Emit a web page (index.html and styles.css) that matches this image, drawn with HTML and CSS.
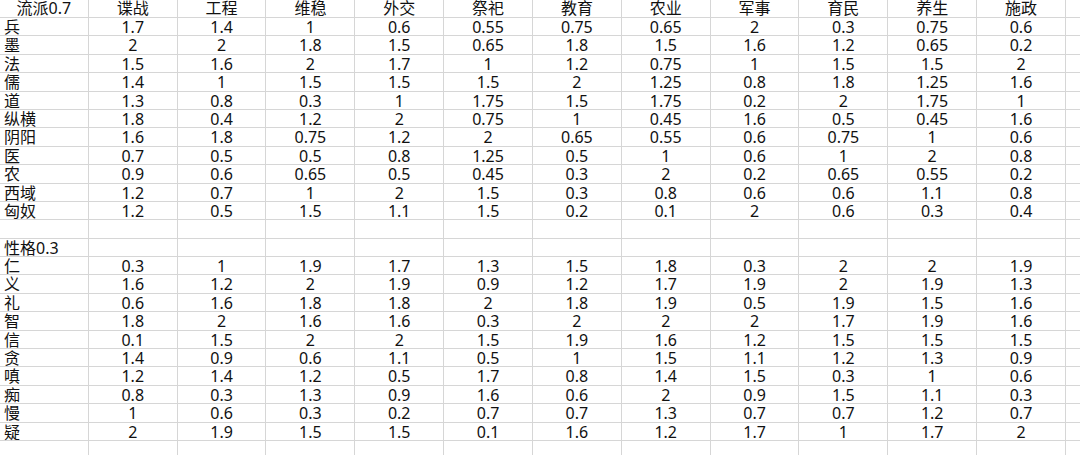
FILE: index.html
```html
<!DOCTYPE html>
<html lang="zh">
<head>
<meta charset="utf-8">
<link rel="stylesheet" href="styles.css">
</head>
<body>
<div class="sheet">
  <div class="row head first"><div class="c hdr">流派0.7</div><div class="c">谍战</div><div class="c">工程</div><div class="c">维稳</div><div class="c">外交</div><div class="c">祭祀</div><div class="c">教育</div><div class="c">农业</div><div class="c">军事</div><div class="c">育民</div><div class="c">养生</div><div class="c">施政</div><div class="f"></div></div>
  <div class="row"><div class="c l">兵</div><div class="c">1.7</div><div class="c">1.4</div><div class="c">1</div><div class="c">0.6</div><div class="c">0.55</div><div class="c">0.75</div><div class="c">0.65</div><div class="c">2</div><div class="c">0.3</div><div class="c">0.75</div><div class="c">0.6</div><div class="f"></div></div>
  <div class="row"><div class="c l">墨</div><div class="c">2</div><div class="c">2</div><div class="c">1.8</div><div class="c">1.5</div><div class="c">0.65</div><div class="c">1.8</div><div class="c">1.5</div><div class="c">1.6</div><div class="c">1.2</div><div class="c">0.65</div><div class="c">0.2</div><div class="f"></div></div>
  <div class="row"><div class="c l">法</div><div class="c">1.5</div><div class="c">1.6</div><div class="c">2</div><div class="c">1.7</div><div class="c">1</div><div class="c">1.2</div><div class="c">0.75</div><div class="c">1</div><div class="c">1.5</div><div class="c">1.5</div><div class="c">2</div><div class="f"></div></div>
  <div class="row"><div class="c l">儒</div><div class="c">1.4</div><div class="c">1</div><div class="c">1.5</div><div class="c">1.5</div><div class="c">1.5</div><div class="c">2</div><div class="c">1.25</div><div class="c">0.8</div><div class="c">1.8</div><div class="c">1.25</div><div class="c">1.6</div><div class="f"></div></div>
  <div class="row"><div class="c l">道</div><div class="c">1.3</div><div class="c">0.8</div><div class="c">0.3</div><div class="c">1</div><div class="c">1.75</div><div class="c">1.5</div><div class="c">1.75</div><div class="c">0.2</div><div class="c">2</div><div class="c">1.75</div><div class="c">1</div><div class="f"></div></div>
  <div class="row"><div class="c l">纵横</div><div class="c">1.8</div><div class="c">0.4</div><div class="c">1.2</div><div class="c">2</div><div class="c">0.75</div><div class="c">1</div><div class="c">0.45</div><div class="c">1.6</div><div class="c">0.5</div><div class="c">0.45</div><div class="c">1.6</div><div class="f"></div></div>
  <div class="row"><div class="c l">阴阳</div><div class="c">1.6</div><div class="c">1.8</div><div class="c">0.75</div><div class="c">1.2</div><div class="c">2</div><div class="c">0.65</div><div class="c">0.55</div><div class="c">0.6</div><div class="c">0.75</div><div class="c">1</div><div class="c">0.6</div><div class="f"></div></div>
  <div class="row"><div class="c l">医</div><div class="c">0.7</div><div class="c">0.5</div><div class="c">0.5</div><div class="c">0.8</div><div class="c">1.25</div><div class="c">0.5</div><div class="c">1</div><div class="c">0.6</div><div class="c">1</div><div class="c">2</div><div class="c">0.8</div><div class="f"></div></div>
  <div class="row"><div class="c l">农</div><div class="c">0.9</div><div class="c">0.6</div><div class="c">0.65</div><div class="c">0.5</div><div class="c">0.45</div><div class="c">0.3</div><div class="c">2</div><div class="c">0.2</div><div class="c">0.65</div><div class="c">0.55</div><div class="c">0.2</div><div class="f"></div></div>
  <div class="row"><div class="c l">西域</div><div class="c">1.2</div><div class="c">0.7</div><div class="c">1</div><div class="c">2</div><div class="c">1.5</div><div class="c">0.3</div><div class="c">0.8</div><div class="c">0.6</div><div class="c">0.6</div><div class="c">1.1</div><div class="c">0.8</div><div class="f"></div></div>
  <div class="row"><div class="c l">匈奴</div><div class="c">1.2</div><div class="c">0.5</div><div class="c">1.5</div><div class="c">1.1</div><div class="c">1.5</div><div class="c">0.2</div><div class="c">0.1</div><div class="c">2</div><div class="c">0.6</div><div class="c">0.3</div><div class="c">0.4</div><div class="f"></div></div>
  <div class="row"><div class="c"></div><div class="c"></div><div class="c"></div><div class="c"></div><div class="c"></div><div class="c"></div><div class="c"></div><div class="c"></div><div class="c"></div><div class="c"></div><div class="c"></div><div class="c"></div><div class="f"></div></div>
  <div class="row"><div class="c l">性格0.3</div><div class="c"></div><div class="c"></div><div class="c"></div><div class="c"></div><div class="c"></div><div class="c"></div><div class="c"></div><div class="c"></div><div class="c"></div><div class="c"></div><div class="c"></div><div class="f"></div></div>
  <div class="row"><div class="c l">仁</div><div class="c">0.3</div><div class="c">1</div><div class="c">1.9</div><div class="c">1.7</div><div class="c">1.3</div><div class="c">1.5</div><div class="c">1.8</div><div class="c">0.3</div><div class="c">2</div><div class="c">2</div><div class="c">1.9</div><div class="f"></div></div>
  <div class="row"><div class="c l">义</div><div class="c">1.6</div><div class="c">1.2</div><div class="c">2</div><div class="c">1.9</div><div class="c">0.9</div><div class="c">1.2</div><div class="c">1.7</div><div class="c">1.9</div><div class="c">2</div><div class="c">1.9</div><div class="c">1.3</div><div class="f"></div></div>
  <div class="row"><div class="c l">礼</div><div class="c">0.6</div><div class="c">1.6</div><div class="c">1.8</div><div class="c">1.8</div><div class="c">2</div><div class="c">1.8</div><div class="c">1.9</div><div class="c">0.5</div><div class="c">1.9</div><div class="c">1.5</div><div class="c">1.6</div><div class="f"></div></div>
  <div class="row"><div class="c l">智</div><div class="c">1.8</div><div class="c">2</div><div class="c">1.6</div><div class="c">1.6</div><div class="c">0.3</div><div class="c">2</div><div class="c">2</div><div class="c">2</div><div class="c">1.7</div><div class="c">1.9</div><div class="c">1.6</div><div class="f"></div></div>
  <div class="row"><div class="c l">信</div><div class="c">0.1</div><div class="c">1.5</div><div class="c">2</div><div class="c">2</div><div class="c">1.5</div><div class="c">1.9</div><div class="c">1.6</div><div class="c">1.2</div><div class="c">1.5</div><div class="c">1.5</div><div class="c">1.5</div><div class="f"></div></div>
  <div class="row"><div class="c l">贪</div><div class="c">1.4</div><div class="c">0.9</div><div class="c">0.6</div><div class="c">1.1</div><div class="c">0.5</div><div class="c">1</div><div class="c">1.5</div><div class="c">1.1</div><div class="c">1.2</div><div class="c">1.3</div><div class="c">0.9</div><div class="f"></div></div>
  <div class="row"><div class="c l">嗔</div><div class="c">1.2</div><div class="c">1.4</div><div class="c">1.2</div><div class="c">0.5</div><div class="c">1.7</div><div class="c">0.8</div><div class="c">1.4</div><div class="c">1.5</div><div class="c">0.3</div><div class="c">1</div><div class="c">0.6</div><div class="f"></div></div>
  <div class="row"><div class="c l">痴</div><div class="c">0.8</div><div class="c">0.3</div><div class="c">1.3</div><div class="c">0.9</div><div class="c">1.6</div><div class="c">0.6</div><div class="c">2</div><div class="c">0.9</div><div class="c">1.5</div><div class="c">1.1</div><div class="c">0.3</div><div class="f"></div></div>
  <div class="row"><div class="c l">慢</div><div class="c">1</div><div class="c">0.6</div><div class="c">0.3</div><div class="c">0.2</div><div class="c">0.7</div><div class="c">0.7</div><div class="c">1.3</div><div class="c">0.7</div><div class="c">0.7</div><div class="c">1.2</div><div class="c">0.7</div><div class="f"></div></div>
  <div class="row"><div class="c l">疑</div><div class="c">2</div><div class="c">1.9</div><div class="c">1.5</div><div class="c">1.5</div><div class="c">0.1</div><div class="c">1.6</div><div class="c">1.2</div><div class="c">1.7</div><div class="c">1</div><div class="c">1.7</div><div class="c">2</div><div class="f"></div></div>
  <div class="row last"><div class="c"></div><div class="c"></div><div class="c"></div><div class="c"></div><div class="c"></div><div class="c"></div><div class="c"></div><div class="c"></div><div class="c"></div><div class="c"></div><div class="c"></div><div class="c"></div><div class="f"></div></div>
</div>
</body>
</html>
```

FILE: styles.css
```css
html, body {
  margin: 0;
  padding: 0;
  background: #ffffff;
  overflow: hidden;
}

.sheet {
  width: 1080px;
  height: 455px;
  overflow: hidden;
  font-family: "Noto Sans", "Noto Sans CJK SC", sans-serif;
  font-size: 16px;
  color: #111111;
}

.row {
  display: grid;
  grid-template-columns: repeat(12, 88.83px) 1fr;
  height: 18.4px;
  box-sizing: border-box;
  border-bottom: 1px solid #d6d6d6;
}

.row.first {
  height: 18px;
}

.row.last {
  height: 30px;
  border-bottom: none;
}

.c {
  box-sizing: border-box;
  border-right: 1px solid #d6d6d6;
  text-align: center;
  line-height: 17.4px;
  padding-top: 1px;
  white-space: nowrap;
}

.c.l {
  text-align: left;
  padding-left: 4px;
}

.c.hdr {
  text-align: center;
}

.row.first .c {
  line-height: 17px;
  padding-top: 0;
}
```
